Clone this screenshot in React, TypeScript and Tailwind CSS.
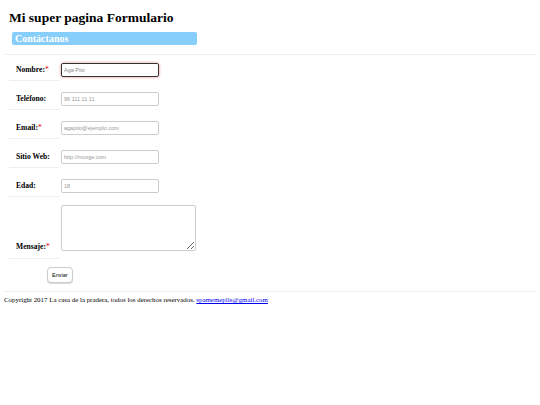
import React from "react";

type Field = {
  label: string;
  required?: boolean;
  placeholder: string;
  focused?: boolean;
};

const fields: Field[] = [
  { label: "Nombre:", required: true, placeholder: "Aga Pito", focused: true },
  { label: "Teléfono:", placeholder: "96 111 11 11" },
  { label: "Email:", required: true, placeholder: "agapito@ejemplo.com" },
  { label: "Sitio Web:", placeholder: "http://mcoge.com" },
  { label: "Edad:", placeholder: "18" },
];

function Label({ text, required }: { text: string; required?: boolean }) {
  return (
    <span className="text-[7.6px] font-bold">
      {text}
      {required ? <span className="font-normal text-red-600">*</span> : null}
    </span>
  );
}

export default function App() {
  return (
    <div className="min-h-[405px] bg-white font-['Liberation_Serif',serif] text-black">
      <header className="pl-[9px] pt-[9px]">
        <h1 className="text-[13.5px] font-bold leading-[18px]">Mi super pagina Formulario</h1>
        <div className="ml-[3px] mt-[5px] h-[13px] w-[185px] rounded-[2px] bg-[#87cefa] px-[3px] text-[10px] font-bold leading-[13px] text-white">
          Contáctanos
        </div>
      </header>
      <div className="mx-[4px] mt-[9px] border-t border-[#eeeeee]" />

      <form className="flex flex-col gap-[7px] pl-[9px] pt-[4px]">
        {fields.map((f) => (
          <div key={f.label} className="flex h-[22px]">
            <div className="flex w-[51px] items-center border-b border-[#eeeeee] pl-[7px]">
              <Label text={f.label} required={f.required} />
            </div>
            <div className="flex items-center pl-[1px]">
              <input
                readOnly
                placeholder={f.placeholder}
                className={
                  f.focused
                    ? "h-[14px] w-[98px] rounded-[2px] border border-[#333] px-[2px] font-['Liberation_Sans',sans-serif] text-[5.5px] shadow-[0_0_3px_#f08080] outline-none placeholder:text-[#888]"
                    : "h-[14px] w-[98px] rounded-[2px] border border-[#cccccc] px-[2px] font-['Liberation_Sans',sans-serif] text-[5.5px] outline-none placeholder:text-[#999]"
                }
              />
            </div>
          </div>
        ))}
        <div className="flex h-[55px]">
          <div className="flex w-[51px] items-end border-b border-[#eeeeee] pb-[6px] pl-[7px]">
            <Label text="Mensaje:" required />
          </div>
          <div className="pl-[1px] pt-[1px]">
            <textarea
              readOnly
              className="h-[46px] w-[135px] rounded-[2px] border border-[#cccccc] outline-none"
            />
          </div>
        </div>
        <div className="-mt-[6px] pl-[38px]">
          <button
            type="button"
            className="h-[16px] rounded-[4px] border border-[#cccccc] bg-white px-[4px] font-['Liberation_Sans',sans-serif] text-[5.5px] shadow-[0_1px_1px_rgba(0,0,0,0.15)]"
          >
            Enviar
          </button>
        </div>
      </form>

      <footer className="mx-[4px] mt-[7px] border-t border-[#eeeeee] pt-[3px] text-[6.9px]">
        Copyright 2017 La casa de la pradera, todos los derechos reservados.{" "}
        <a href="#" className="text-[#0000ee] underline">
          spamemeplis@gmail.com
        </a>
      </footer>
    </div>
  );
}
